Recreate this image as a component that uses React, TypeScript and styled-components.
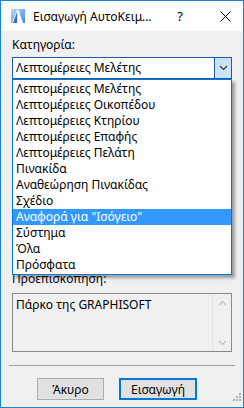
import React from 'react'
import styled, { createGlobalStyle } from 'styled-components'

const categories = [
  'Λεπτομέρειες Μελέτης',
  'Λεπτομέρειες Οικοπέδου',
  'Λεπτομέρειες Κτηρίου',
  'Λεπτομέρειες Επαφής',
  'Λεπτομέρειες Πελάτη',
  'Πινακίδα',
  'Αναθεώρηση Πινακίδας',
  'Σχέδιο',
  'Αναφορά για "Ισόγειο"',
  'Σύστημα',
  'Όλα',
  'Πρόσφατα',
]
const selectedIndex = 8

const GlobalStyle = createGlobalStyle`
  html, body {
    margin: 0;
    padding: 0;
    width: 244px;
    height: 408px;
    overflow: hidden;
    background: #f0f0f0;
  }
  body {
    font-family: "Noto Sans", "Open Sans", sans-serif;
    font-size: 12px;
    color: #000;
  }
`

const Window = styled.div`
  box-sizing: border-box;
  width: 244px;
  height: 408px;
  border: 1px solid #1883d7;
  background: #f0f0f0;
  display: flex;
  flex-direction: column;
  position: relative;
`

const TitleBar = styled.div`
  height: 30px;
  background: #fff;
  display: flex;
  align-items: center;
  padding-left: 9px;
  flex-shrink: 0;
`

const TitleText = styled.div`
  margin-left: 7px;
  font-size: 12px;
  flex: 1;
  white-space: nowrap;
`

const HelpButton = styled.div`
  width: 26px;
  text-align: center;
  font-size: 13px;
  margin-right: 19px;
`

const CloseButton = styled.div`
  width: 26px;
  margin-right: 5px;
  display: flex;
  justify-content: center;
`

const Body = styled.div`
  flex: 1;
  display: flex;
  flex-direction: column;
  padding: 0 7px;
`

const Section = styled.div`
  padding: 0 4px;
  display: flex;
  flex-direction: column;
`

const Label = styled.div<{ $top: number }>`
  margin-top: ${p => p.$top}px;
  line-height: 15px;
  height: 15px;
`

const ComboWrap = styled.div`
  position: relative;
  margin-top: 5px;
`

const Combo = styled.div`
  box-sizing: border-box;
  height: 22px;
  border: 1px solid #1c5ca8;
  background: #fff;
  display: flex;
  align-items: stretch;
`

const ComboValue = styled.div`
  flex: 1;
  padding-left: 3px;
  line-height: 20px;
`

const ComboButton = styled.div`
  width: 16px;
  background: #cce4f7;
  border-left: 1px solid #1c5ca8;
  display: flex;
  align-items: center;
  justify-content: center;
`

const DropList = styled.div`
  position: absolute;
  left: 0;
  right: 0;
  top: 100%;
  box-sizing: border-box;
  border: 1px solid #0078d7;
  background: #fff;
  box-shadow: 3px 3px 3px rgba(0, 0, 0, 0.35);
  z-index: 2;
  padding: 1px 0 1px;
`

const DropItem = styled.div<{ $selected?: boolean }>`
  height: 16px;
  line-height: 16px;
  padding-left: 3px;
  white-space: nowrap;
  background: ${p => (p.$selected ? '#3399ff' : 'transparent')};
  color: ${p => (p.$selected ? '#fff' : '#000')};
`

const HiddenArea = styled.div`
  height: 177px;
`

const Preview = styled.div`
  box-sizing: border-box;
  margin-top: 7px;
  height: 59px;
  border: 1px solid #8a8a8a;
  background: #f0f0f0;
  display: flex;
`

const PreviewText = styled.div`
  flex: 1;
  padding: 3px 0 0 3px;
  line-height: 15px;
`

const ScrollTrack = styled.div`
  width: 18px;
  border-left: 1px solid #e4e4e4;
  display: flex;
  flex-direction: column;
  justify-content: space-between;
  align-items: center;
  padding: 6px 0 5px;
`

const Separator = styled.div`
  margin: 13px 1px 0;
  height: 1px;
  background: #a0a0a0;
`

const ButtonRow = styled.div`
  margin-top: 12px;
  display: flex;
  justify-content: center;
  gap: 15px;
  padding-right: 10px;
`

const Button = styled.div<{ $primary?: boolean; $w: number }>`
  box-sizing: border-box;
  width: ${p => p.$w}px;
  height: 22px;
  background: #e1e1e1;
  border: ${p => (p.$primary ? '2px solid #0078d7' : '1px solid #adadad')};
  display: flex;
  align-items: center;
  justify-content: center;
`

const Grip = styled.div`
  position: absolute;
  right: 2px;
  bottom: 2px;
`

const AppIcon = () => (
  <svg width="16" height="16" viewBox="0 0 16 16">
    <defs>
      <linearGradient id="ig" x1="0" y1="0" x2="1" y2="1">
        <stop offset="0" stopColor="#b9d6fb" />
        <stop offset="1" stopColor="#3f86ea" />
      </linearGradient>
    </defs>
    <rect x="1" y="1" width="14" height="14" fill="url(#ig)" />
    <path d="M2 15 L7 2 L8.5 2 L13 15 Z" fill="#fff" />
    <path d="M3 15 L7.2 3.5 L7.2 15 Z" fill="#2f6fd6" />
  </svg>
)

const Chevron = ({ up, color }: { up?: boolean; color: string }) => (
  <svg width="9" height="6" viewBox="0 0 9 6">
    <path d={up ? 'M1 5 L4.5 1.5 L8 5' : 'M1 1 L4.5 4.5 L8 1'} fill="none" stroke={color} strokeWidth="1.2" />
  </svg>
)

export default function App() {
  return (
    <>
      <GlobalStyle />
      <Window>
        <TitleBar>
          <AppIcon />
          <TitleText>Εισαγωγή ΑυτοΚειμ...</TitleText>
          <HelpButton>?</HelpButton>
          <CloseButton>
            <svg width="11" height="11" viewBox="0 0 11 11">
              <path d="M0.5 0.5 L10.5 10.5 M10.5 0.5 L0.5 10.5" stroke="#000" strokeWidth="1" />
            </svg>
          </CloseButton>
        </TitleBar>
        <Body>
          <Section>
            <Label $top={6}>Κατηγορία:</Label>
            <ComboWrap>
              <Combo>
                <ComboValue>{categories[0]}</ComboValue>
                <ComboButton>
                  <Chevron color="#333" />
                </ComboButton>
              </Combo>
              <DropList>
                {categories.map((c, i) => (
                  <DropItem key={c} $selected={i === selectedIndex}>
                    {c}
                  </DropItem>
                ))}
              </DropList>
            </ComboWrap>
            <HiddenArea />
            <Label $top={15}>Προεπισκόπηση:</Label>
            <Preview>
              <PreviewText>Πάρκο της GRAPHISOFT</PreviewText>
              <ScrollTrack>
                <Chevron up color="#c2c2c2" />
                <Chevron color="#c2c2c2" />
              </ScrollTrack>
            </Preview>
          </Section>
          <Separator />
          <ButtonRow>
            <Button $w={67}>Άκυρο</Button>
            <Button $w={78} $primary>
              Εισαγωγή
            </Button>
          </ButtonRow>
        </Body>
        <Grip>
          <svg width="8" height="8" viewBox="0 0 8 8" fill="#b4b4b4">
            <rect x="6" y="0" width="2" height="2" />
            <rect x="3" y="3" width="2" height="2" />
            <rect x="6" y="3" width="2" height="2" />
            <rect x="0" y="6" width="2" height="2" />
            <rect x="3" y="6" width="2" height="2" />
            <rect x="6" y="6" width="2" height="2" />
          </svg>
        </Grip>
      </Window>
    </>
  )
}
